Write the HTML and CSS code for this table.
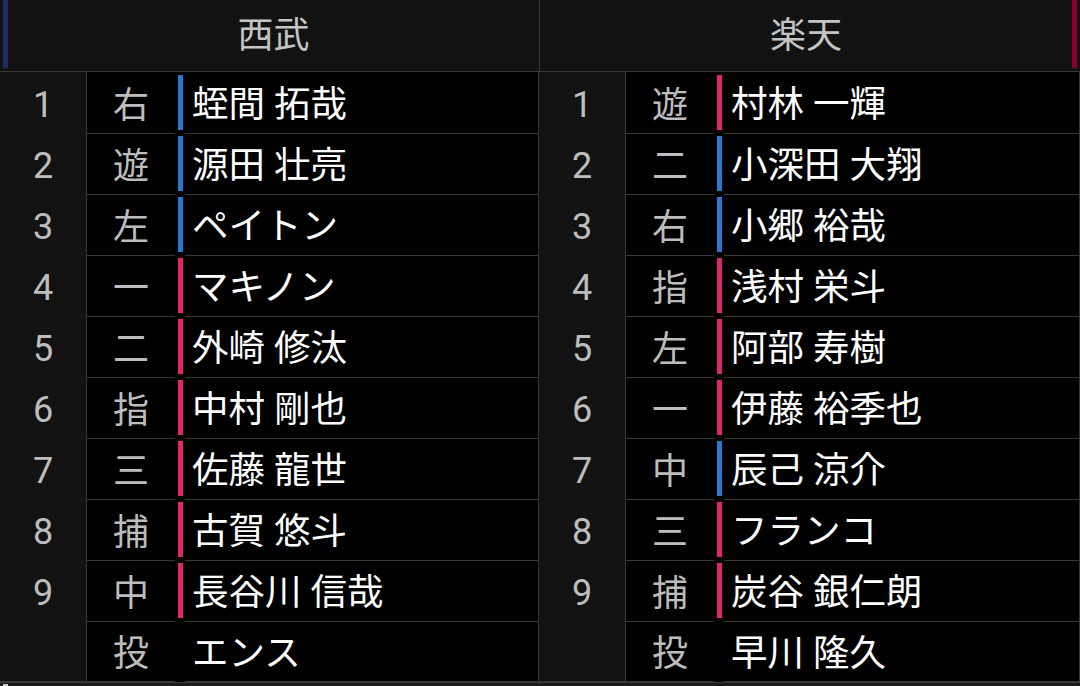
FILE: index.html
```html
<!DOCTYPE html>
<html lang="ja">
<head>
<meta charset="utf-8">
<link rel="stylesheet" href="styles.css">
</head>
<body>
<div class="board">
  <div class="head">
    <div class="head-cell left"><span class="hbar lions"></span><span class="team">西武</span></div>
    <div class="head-cell right"><span class="team">楽天</span><span class="hbar eagles"></span></div>
  </div>
  <div class="rows">
    <div class="row">
      <div class="side left"><div class="num">1</div><div class="pos">右</div><div class="barcell"><span class="bar l"></span></div><div class="name">蛭間 拓哉</div></div>
      <div class="side right"><div class="num">1</div><div class="pos">遊</div><div class="barcell"><span class="bar r"></span></div><div class="name">村林 一輝</div></div>
    </div>
    <div class="row">
      <div class="side left"><div class="num">2</div><div class="pos">遊</div><div class="barcell"><span class="bar l"></span></div><div class="name">源田 壮亮</div></div>
      <div class="side right"><div class="num">2</div><div class="pos">二</div><div class="barcell"><span class="bar l"></span></div><div class="name">小深田 大翔</div></div>
    </div>
    <div class="row">
      <div class="side left"><div class="num">3</div><div class="pos">左</div><div class="barcell"><span class="bar l"></span></div><div class="name">ペイトン</div></div>
      <div class="side right"><div class="num">3</div><div class="pos">右</div><div class="barcell"><span class="bar l"></span></div><div class="name">小郷 裕哉</div></div>
    </div>
    <div class="row">
      <div class="side left"><div class="num">4</div><div class="pos">一</div><div class="barcell"><span class="bar r"></span></div><div class="name">マキノン</div></div>
      <div class="side right"><div class="num">4</div><div class="pos">指</div><div class="barcell"><span class="bar r"></span></div><div class="name">浅村 栄斗</div></div>
    </div>
    <div class="row">
      <div class="side left"><div class="num">5</div><div class="pos">二</div><div class="barcell"><span class="bar r"></span></div><div class="name">外崎 修汰</div></div>
      <div class="side right"><div class="num">5</div><div class="pos">左</div><div class="barcell"><span class="bar r"></span></div><div class="name">阿部 寿樹</div></div>
    </div>
    <div class="row">
      <div class="side left"><div class="num">6</div><div class="pos">指</div><div class="barcell"><span class="bar r"></span></div><div class="name">中村 剛也</div></div>
      <div class="side right"><div class="num">6</div><div class="pos">一</div><div class="barcell"><span class="bar r"></span></div><div class="name">伊藤 裕季也</div></div>
    </div>
    <div class="row">
      <div class="side left"><div class="num">7</div><div class="pos">三</div><div class="barcell"><span class="bar r"></span></div><div class="name">佐藤 龍世</div></div>
      <div class="side right"><div class="num">7</div><div class="pos">中</div><div class="barcell"><span class="bar l"></span></div><div class="name">辰己 涼介</div></div>
    </div>
    <div class="row">
      <div class="side left"><div class="num">8</div><div class="pos">捕</div><div class="barcell"><span class="bar r"></span></div><div class="name">古賀 悠斗</div></div>
      <div class="side right"><div class="num">8</div><div class="pos">三</div><div class="barcell"><span class="bar r"></span></div><div class="name">フランコ</div></div>
    </div>
    <div class="row">
      <div class="side left"><div class="num">9</div><div class="pos">中</div><div class="barcell"><span class="bar r"></span></div><div class="name">長谷川 信哉</div></div>
      <div class="side right"><div class="num">9</div><div class="pos">捕</div><div class="barcell"><span class="bar r"></span></div><div class="name">炭谷 銀仁朗</div></div>
    </div>
    <div class="row">
      <div class="side left"><div class="num"></div><div class="pos">投</div><div class="barcell"></div><div class="name">エンス</div></div>
      <div class="side right"><div class="num"></div><div class="pos">投</div><div class="barcell"></div><div class="name">早川 隆久</div></div>
    </div>
  </div>
  <div class="foot"><span class="knob"></span></div>
</div>
</body>
</html>
```

FILE: styles.css
```css
*, *::before, *::after {
  box-sizing: border-box;
}
html, body {
  margin: 0;
  padding: 0;
  background: #000;
}
body {
  font-family: Roboto, "Noto Sans CJK JP", sans-serif;
  width: 1080px;
  height: 686px;
  overflow: hidden;
}
.board {
  width: 1080px;
}
.head {
  display: flex;
  height: 72px;
  background: #121212;
  border-bottom: 1px solid #383838;
}
.head-cell {
  display: flex;
  align-items: flex-start;
}
.head-cell.left {
  width: 540px;
  border-right: 1px solid #383838;
  padding-left: 3px;
}
.head-cell.right {
  flex: 1;
  padding-right: 3px;
}
.hbar {
  width: 5px;
  height: 68px;
  flex: none;
}
.hbar.lions { background: #1d2f5e; }
.hbar.eagles { background: #8b0030; }
.team {
  flex: 1;
  align-self: stretch;
  display: flex;
  align-items: center;
  justify-content: center;
  color: #c4c4c4;
  font-size: 36px;
  padding-bottom: 8px;
}
.row {
  display: flex;
  height: 61px;
}
.side {
  display: grid;
  grid-template-columns: 87px 88px 10px 1fr;
  border-right: 1px solid #383838;
}
.side.left { width: 539px; }
.side.right { width: 541px; }
.num, .pos, .name {
  border-bottom: 1px solid #383838;
  display: flex;
  align-items: center;
  font-size: 36px;
}
.num {
  background: #121212;
  border-right: 1px solid #383838;
  justify-content: center;
  color: #bdbdbd;
  padding-top: 4px;
}
.pos {
  justify-content: center;
  color: #bdbdbd;
  padding-bottom: 2px;
}
.barcell {
  border-bottom: 1px solid #000;
  padding: 3px 2px 3px 3px;
}
.bar {
  display: block;
  width: 5px;
  height: 55px;
}
.bar.l { background: #2a78cf; }
.bar.r { background: #e2266d; }
.name {
  color: #fff;
  padding-left: 7px;
  padding-bottom: 2px;
  font-size: 36.5px;
  white-space: nowrap;
}
.foot {
  height: 6px;
  background: #1b1b1b;
  border-top: 1px solid #3a3a3a;
  position: relative;
}
.knob {
  position: absolute;
  left: 3px;
  top: 1px;
  width: 5px;
  height: 4px;
  background: #cfcfcf;
}
```
